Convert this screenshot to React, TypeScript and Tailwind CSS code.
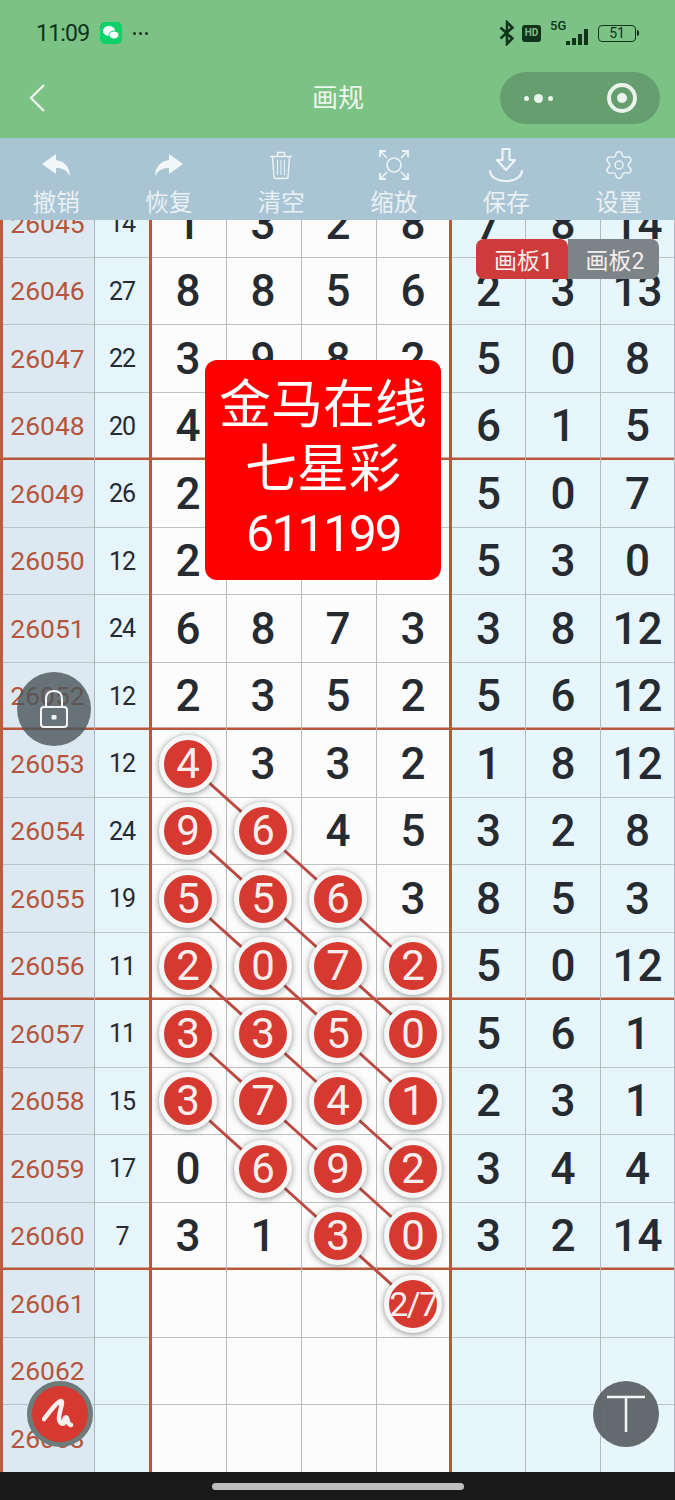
import React from "react";
import { Settings } from "lucide-react";

type Row = { id: string; sum: string; mid: string[]; right: string[]; hits: number[] };

const rows: Row[] = [
  { id: "26045", sum: "14", mid: ["1", "3", "2", "8"], right: ["7", "8", "14"], hits: [] },
  { id: "26046", sum: "27", mid: ["8", "8", "5", "6"], right: ["2", "3", "13"], hits: [] },
  { id: "26047", sum: "22", mid: ["3", "9", "8", "2"], right: ["5", "0", "8"], hits: [] },
  { id: "26048", sum: "20", mid: ["4", "3", "7", "6"], right: ["6", "1", "5"], hits: [] },
  { id: "26049", sum: "26", mid: ["2", "9", "8", "7"], right: ["5", "0", "7"], hits: [] },
  { id: "26050", sum: "12", mid: ["2", "4", "1", "5"], right: ["5", "3", "0"], hits: [] },
  { id: "26051", sum: "24", mid: ["6", "8", "7", "3"], right: ["3", "8", "12"], hits: [] },
  { id: "26052", sum: "12", mid: ["2", "3", "5", "2"], right: ["5", "6", "12"], hits: [] },
  { id: "26053", sum: "12", mid: ["4", "3", "3", "2"], right: ["1", "8", "12"], hits: [0] },
  { id: "26054", sum: "24", mid: ["9", "6", "4", "5"], right: ["3", "2", "8"], hits: [0, 1] },
  { id: "26055", sum: "19", mid: ["5", "5", "6", "3"], right: ["8", "5", "3"], hits: [0, 1, 2] },
  { id: "26056", sum: "11", mid: ["2", "0", "7", "2"], right: ["5", "0", "12"], hits: [0, 1, 2, 3] },
  { id: "26057", sum: "11", mid: ["3", "3", "5", "0"], right: ["5", "6", "1"], hits: [0, 1, 2, 3] },
  { id: "26058", sum: "15", mid: ["3", "7", "4", "1"], right: ["2", "3", "1"], hits: [0, 1, 2, 3] },
  { id: "26059", sum: "17", mid: ["0", "6", "9", "2"], right: ["3", "4", "4"], hits: [1, 2, 3] },
  { id: "26060", sum: "7", mid: ["3", "1", "3", "0"], right: ["3", "2", "14"], hits: [2, 3] },
  { id: "26061", sum: "", mid: ["", "", "", "2/7"], right: ["", "", ""], hits: [3] },
  { id: "26062", sum: "", mid: ["", "", "", ""], right: ["", "", ""], hits: [] },
  { id: "26063", sum: "", mid: ["", "", "", ""], right: ["", "", ""], hits: [] },
];

const ROW_H = 67.5;
const colCenter = [188, 263, 338, 413];

function links() {
  const out: { x1: number; y1: number; x2: number; y2: number }[] = [];
  rows.forEach((r, i) => {
    const next = rows[i + 1];
    if (!next) return;
    r.hits.forEach((c) => {
      if (next.hits.includes(c + 1)) {
        out.push({
          x1: colCenter[c],
          y1: ROW_H * i + ROW_H / 2,
          x2: colCenter[c + 1],
          y2: ROW_H * (i + 1) + ROW_H / 2,
        });
      }
    });
  });
  return out;
}

const Undo = ({ flip }: { flip?: boolean }) => (
  <svg width="30" height="24" viewBox="0 0 30 24" className={flip ? "-scale-x-100" : ""} fill="#f1f6f8">
    <path d="M1 11 L15 1 V7 C24 8 29 15 29 23 C25 16 20 15 15 15 V21 Z" />
  </svg>
);

const Trash = () => (
  <svg width="30" height="30" viewBox="0 0 30 30" fill="none" stroke="#eef4f7" strokeWidth="1.4">
    <path d="M4 6.5 H26 M11.5 6 V2.5 H18.5 V6 M6.5 7 L8 27 C8 28 9 28.5 10 28.5 H20 C21 28.5 22 28 22 27 L23.5 7" />
    <path d="M11.5 10 V25 M15 10 V25 M18.5 10 V25" strokeWidth="1" />
  </svg>
);

const Zoom = () => (
  <svg width="32" height="32" viewBox="0 0 32 32" fill="none" stroke="#eef4f7" strokeWidth="1.6">
    <circle cx="16" cy="16" r="7" />
    <path d="M2 8 V2 H8 M24 2 H30 V8 M30 24 V30 H24 M8 30 H2 V24" strokeWidth="1.8" />
    <path d="M3 3 L9 9 M29 3 L23 9 M29 29 L23 23 M3 29 L9 23" />
  </svg>
);

const Save = () => (
  <svg width="36" height="36" viewBox="0 0 36 36" fill="none" stroke="#eef4f7" strokeWidth="2.2" strokeLinejoin="round" strokeLinecap="round">
    <path d="M14.5 2 H21.5 V13 H27 L18 23 L9 13 H14.5 Z" />
    <path d="M2 24 C3 31 10 34 18 34 C26 34 33 31 34 24" />
  </svg>
);

const tools: { label: string; icon: React.ReactNode }[] = [
  { label: "撤销", icon: <Undo /> },
  { label: "恢复", icon: <Undo flip /> },
  { label: "清空", icon: <Trash /> },
  { label: "缩放", icon: <Zoom /> },
  { label: "保存", icon: <Save /> },
  { label: "设置", icon: <Settings size={32} strokeWidth={1.1} color="#eef4f7" /> },
];

const Cell = ({ value, bg, thick, hit, nudge }: { value: string; bg: string; thick?: boolean; hit?: boolean; nudge?: boolean }) => (
  <div className={`${bg} ${thick ? "border-r-[3px] border-r-[#b9573a]" : "border-r border-r-[#b4b9bb]"} ${nudge ? "pr-[2px]" : ""} flex items-center justify-center`}>
    {hit ? (
      <div className="relative z-10 flex h-[58px] w-[58px] items-center justify-center rounded-full border-[5px] border-[#f7f7f7] bg-[#d5392f] shadow-[0_1px_6px_rgba(40,50,50,0.55)]">
        <span className={`${value.length > 1 ? "text-[34px] tracking-[-1.5px]" : "text-[42px]"} font-normal leading-none text-[#f8eeee]`}>{value}</span>
      </div>
    ) : (
      <span className="text-[44px] font-medium leading-none text-[#252b30]">{value}</span>
    )}
  </div>
);

export default function App() {
  return (
    <div className="relative flex h-[1500px] w-[675px] flex-col overflow-hidden bg-white font-['Roboto','Noto_Sans_CJK_SC',sans-serif]">
      {/* status + nav */}
      <header className="relative z-20 h-[138px] bg-[#7cc285]">
        <div className="flex h-[66px] items-center pl-9 pr-9">
          <span className="text-[23px] leading-none tracking-[-0.8px] text-[#10331c]">11:09</span>
          <span className="ml-[11px] flex h-[22px] w-[22px] items-center justify-center rounded-[5px] bg-[#0fd16a]">
            <svg width="18" height="16" viewBox="0 0 18 16" fill="white">
              <ellipse cx="7" cy="6" rx="6" ry="5" />
              <ellipse cx="12" cy="10" rx="5" ry="4" stroke="#0fd16a" strokeWidth="1" />
            </svg>
          </span>
          <span className="ml-[11px] flex gap-[3px]">
            <i className="h-[3px] w-[3px] rounded-full bg-[#10331c]" />
            <i className="h-[3px] w-[3px] rounded-full bg-[#10331c]" />
            <i className="h-[3px] w-[3px] rounded-full bg-[#10331c]" />
          </span>
          <div className="ml-auto flex items-center">
            <svg width="16" height="26" viewBox="0 0 14 24" fill="none" stroke="#10331c" strokeWidth="2.4">
              <path d="M1 7 L12 17 L7 22 V2 L12 7 L1 17" />
            </svg>
            <span className="ml-[7px] flex h-[17px] w-[19px] items-center justify-center rounded-[3px] bg-[#10331c] text-[10px] font-bold leading-none text-[#7cc285]">HD</span>
            <div className="relative ml-[9px] h-[24px] w-[38px]">
              <span className="absolute left-0 top-0 text-[13px] font-medium leading-[10px] text-[#10331c]">5G</span>
              <div className="absolute bottom-0 right-0 flex items-end gap-[2px]">
                <i className="h-[4px] w-[4px] bg-[#10331c]" />
                <i className="h-[7px] w-[4px] bg-[#10331c]" />
                <i className="h-[11px] w-[4px] bg-[#10331c]" />
                <i className="h-[16px] w-[4px] bg-[#10331c]" />
              </div>
            </div>
            <div className="ml-[10px] flex h-[17px] w-[38px] items-center justify-center rounded-[4px] border-[1.5px] border-[#10331c] text-[14px] leading-none text-[#10331c]">51</div>
            <i className="ml-[1px] h-[6px] w-[2px] rounded-r bg-[#10331c]" />
          </div>
        </div>
        <div className="relative mt-[6px] flex h-[52px] items-center justify-center pl-[1px]">
          <svg className="absolute left-7 top-[11px]" width="18" height="30" viewBox="0 0 18 30" fill="none" stroke="#eef6ee" strokeWidth="2.4">
            <path d="M16 2 L3 15 L16 28" />
          </svg>
          <span className="text-[26px] leading-none text-[#eef6ee]">画规</span>
          <div className="absolute right-[15px] top-0 flex h-[52px] w-[160px] items-center justify-between rounded-full bg-[#659f6f] pl-[24px] pr-[23px]">
            <div className="flex items-center gap-[5px]">
              <i className="h-[5px] w-[5px] rounded-full bg-[#eaf4ea]" />
              <i className="h-[9px] w-[9px] rounded-full bg-[#eaf4ea]" />
              <i className="h-[5px] w-[5px] rounded-full bg-[#eaf4ea]" />
            </div>
            <div className="flex h-[30px] w-[30px] items-center justify-center rounded-full border-[4px] border-[#eaf4ea]">
              <i className="h-[10px] w-[10px] rounded-full bg-[#eaf4ea]" />
            </div>
          </div>
        </div>
      </header>

      {/* toolbar */}
      <nav className="relative z-20 grid h-[82px] grid-cols-6 bg-[#a9c4d2]">
        {tools.map((t) => (
          <div key={t.label} className="flex flex-col items-center">
            <div className="flex h-[44px] w-full items-center justify-center pt-[10px]">{t.icon}</div>
            <span className="mt-[6px] text-[23.5px] leading-[30px] text-[#eaf1f5]">{t.label}</span>
          </div>
        ))}
      </nav>

      {/* table */}
      <main className="flex-1 overflow-hidden">
        <div className="relative -mt-[30px] grid auto-rows-[67.5px] grid-cols-[95px_57px_75px_75px_75px_75px_74px_75px_74px] border-r border-r-[#b9573a]">
          {rows.map((r) => {
            const thick = ["26048", "26052", "26056", "26060"].includes(r.id);
            const line = thick ? "shadow-[inset_0_-2.5px_0_#b9573a]" : "shadow-[inset_0_-1px_0_#bcc1c4]";
            return (
              <div key={r.id} className="contents">
                <div className={`${line} flex items-center justify-center border-l-[3px] border-r border-l-[#c0593d] border-r-[#a9b4bb] bg-[#dde9f2] pr-[2px] text-[26.5px] leading-none text-[#b4553c]`}>{r.id}</div>
                <div className={`${line} flex items-center justify-center border-r-[3px] border-r-[#b9573a] bg-[#e6f4fc] text-[25px] leading-none tracking-[-1px] text-[#252b30]`}>{r.sum}</div>
                {r.mid.map((v, i) => (
                  <Cell key={i} value={v} bg={`${line} bg-[#fcfcfc]`} thick={i === 3} hit={r.hits.includes(i)} nudge={i < 3} />
                ))}
                {r.right.map((v, i) => (
                  <Cell key={i} value={v} bg={`${line} bg-[#e7f5fd]`} />
                ))}
              </div>
            );
          })}
          <svg className="pointer-events-none absolute inset-0 h-full w-full" fill="none">
            {links().map((l, i) => (
              <line key={i} x1={l.x1} y1={l.y1} x2={l.x2} y2={l.y2} stroke="#bd4a42" strokeWidth="3" />
            ))}
          </svg>
        </div>
      </main>

      {/* gesture bar */}
      <footer className="relative z-20 flex h-[28px] items-center justify-center bg-[#1a1a1a]">
        <div className="h-[7px] w-[252px] rounded-full bg-[#bdbdbd]" />
      </footer>

      {/* overlays */}
      <div className="absolute left-[205px] top-[360px] z-30 flex h-[220px] w-[236px] flex-col items-center justify-center rounded-[12px] bg-[#fe0000] text-white">
        <div className="text-[52px] leading-[64px]">金马在线</div>
        <div className="text-[52px] leading-[64px]">七星彩</div>
        <div className="text-[50px] leading-[64px] tracking-[-2.4px]">611199</div>
      </div>

      <div className="absolute left-[476px] top-[239px] z-30 flex h-[40px] text-[23px] leading-none text-[#f3eeee]">
        <div className="flex w-[92px] items-center justify-center rounded-l-[8px] rounded-tr-[8px] bg-[#cf3a3a] pl-[3px] pt-[5px]">画板1</div>
        <div className="flex w-[91px] items-center justify-center rounded-r-[8px] bg-[#7d8488] pl-[3px] pt-[5px]">画板2</div>
      </div>

      <div className="absolute left-[17px] top-[672px] z-30 flex h-[74px] w-[74px] items-center justify-center rounded-full bg-[#4a5559]/80">
        <svg width="30" height="40" viewBox="0 0 30 40" fill="none" stroke="#f4f6f6" strokeWidth="2">
          <path d="M7 18 V10 C7 5 10 2 15 2 C20 2 23 5 23 10 V18" />
          <rect x="2" y="18" width="26" height="20" rx="3" />
          <rect x="12.5" y="26" width="5" height="4.5" rx="1" fill="#f4f6f6" stroke="none" />
        </svg>
      </div>

      <div className="absolute left-[27px] top-[1381px] z-30 flex h-[66px] w-[66px] items-center justify-center rounded-full border-[5px] border-[#6d7c7b] bg-[#d5392f]">
        <svg width="36" height="32" viewBox="0 0 36 32" fill="none" stroke="#f8efef" strokeWidth="4.5" strokeLinecap="round" strokeLinejoin="round">
          <path d="M2 21 C8 14 14 4 19 3 C22 3 17 14 17 20 C17 25 21 27 22 25 C22 21 23 18 25 20 C26 23 25 26 29 27" />
        </svg>
      </div>

      <div className="absolute left-[593px] top-[1381px] z-30 flex h-[66px] w-[66px] items-center justify-center rounded-full bg-[#5d6367]/95">
        <svg width="40" height="38" viewBox="0 0 40 38" fill="none" stroke="#f4f6f6" strokeWidth="2.5">
          <path d="M1 2 H39 M20 2 V37" />
        </svg>
      </div>
    </div>
  );
}
